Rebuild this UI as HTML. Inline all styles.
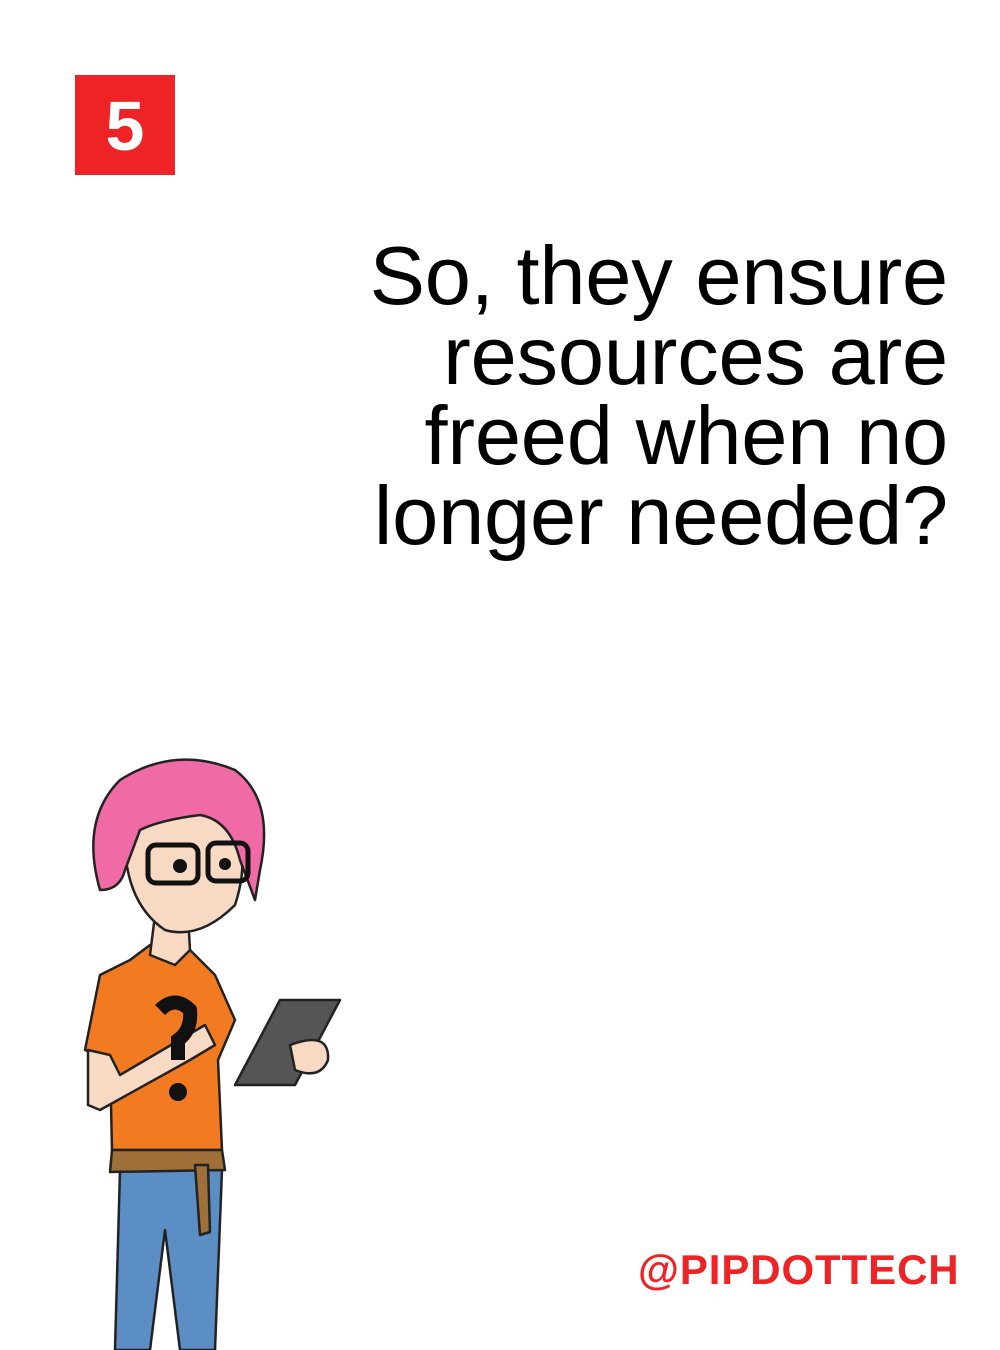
<!DOCTYPE html>
<html><head><meta charset="utf-8"><style>
body{margin:0;width:1000px;height:1350px;background:#fff;position:relative;overflow:hidden;font-family:"Liberation Sans",sans-serif}
.badge{position:absolute;left:75px;top:75px;width:100px;height:100px;background:#ee2326;color:#fff;font-weight:bold;font-size:70px;line-height:102px;text-align:center}
.q{position:absolute;right:52px;top:236px;text-align:right;font-size:83px;line-height:80px;color:#000;letter-spacing:-0.2px}
.h{position:absolute;left:638px;top:1246px;font-size:42px;font-weight:bold;color:#ee2326;letter-spacing:0.9px}
svg{position:absolute;left:0;top:0}
</style></head><body>
<div class="badge">5</div>
<div class="q">So, they ensure<br>resources are<br>freed when no<br>longer needed?</div>
<div class="h">@PIPDOTTECH</div>
<svg width="400" height="1350" viewBox="0 0 400 1350">
<g stroke="#222" stroke-width="2.5" stroke-linejoin="round">
<path d="M120 1170 L115 1350 L150 1350 L165 1230 L180 1350 L215 1350 L222 1170 Z" fill="#5b8ec4"/>
<path d="M150 945 L130 960 L100 975 L85 1050 L110 1060 L112 1150 L222 1150 L218 1060 L235 1020 L215 975 L185 945 Z" fill="#f27b22"/>
<path d="M112 1150 L222 1150 L225 1170 L110 1172 Z" fill="#a0703a"/>
<path d="M195 1165 L200 1235 L210 1232 L208 1165Z" fill="#a0703a"/>
<path d="M88 1050 L88 1105 L100 1110 L190 1060 L215 1045 L205 1025 L120 1075 L110 1055 Z" fill="#f7d9c4"/>
<path d="M155 915 L150 955 L175 965 L190 950 L188 915 Z" fill="#f7d9c4"/>
<path d="M125 820 Q120 900 165 930 Q200 940 235 905 Q250 860 235 820 Q190 800 125 820Z" fill="#f7d9c4"/>
<path d="M100 890 Q80 820 120 780 Q175 745 235 770 Q275 800 260 870 L255 900 L240 860 Q230 820 200 815 Q160 820 140 830 L125 870 Q120 890 100 890Z" fill="#f06aa5"/>
<path d="M235 1085 L280 1000 L340 1000 L295 1085 Z" fill="#555"/>
<path d="M290 1045 Q330 1030 328 1060 Q320 1080 295 1070Z" fill="#f7d9c4"/>
</g>
<g fill="none" stroke="#111" stroke-width="5">
<rect x="148" y="845" width="50" height="38" rx="8"/><rect x="208" y="843" width="40" height="38" rx="8"/>
</g>
<circle cx="180" cy="866" r="7" fill="#111"/><circle cx="225" cy="864" r="6" fill="#111"/>
<path d="M160 1010 Q175 995 190 1010 Q192 1030 178 1040 L178 1060" stroke="#111" stroke-width="14" fill="none"/>
<circle cx="178" cy="1092" r="9" fill="#111"/>
</svg>
</body></html>
